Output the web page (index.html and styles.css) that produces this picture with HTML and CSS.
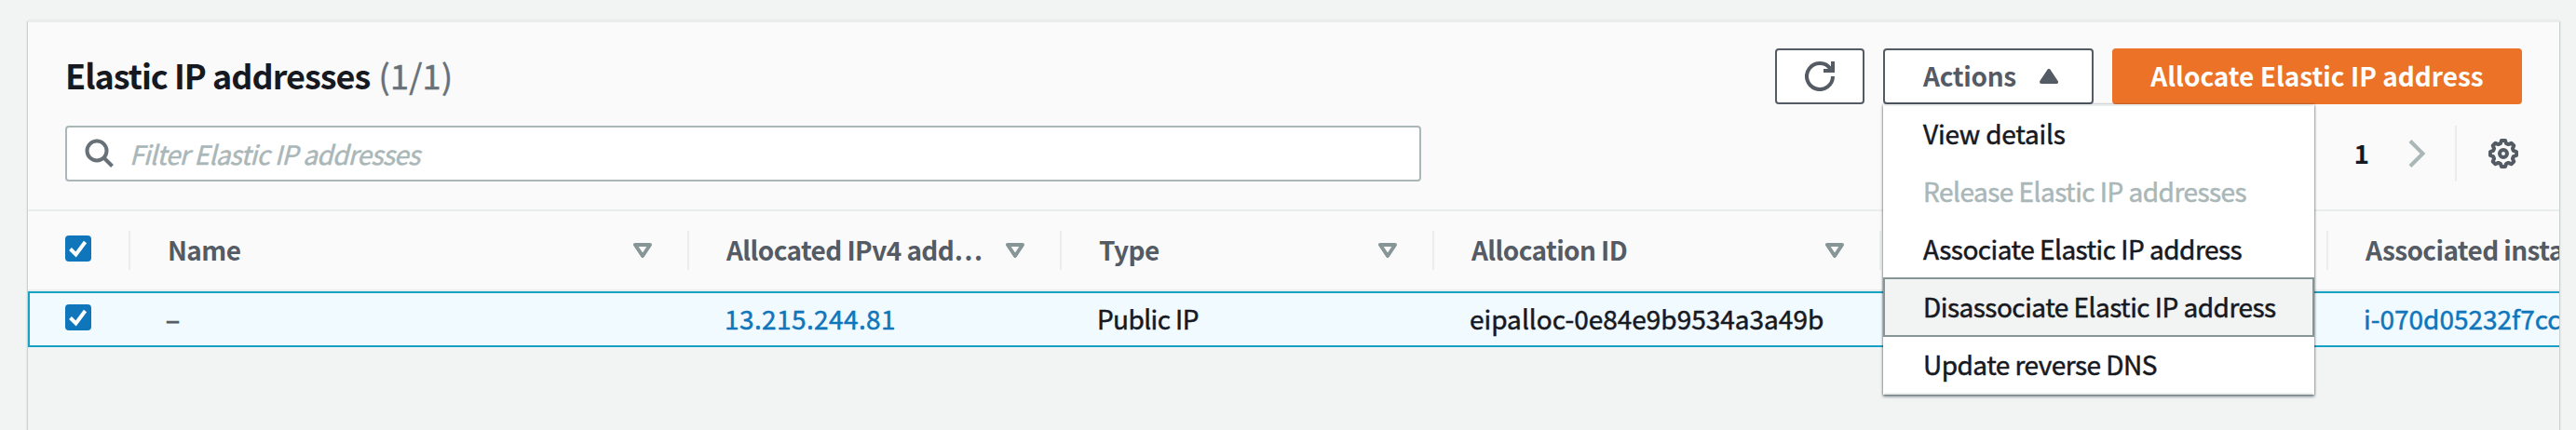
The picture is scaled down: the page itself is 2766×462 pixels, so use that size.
FILE: index.html
```
<!DOCTYPE html>
<html lang="en">
<head>
<meta charset="utf-8">
<title>Elastic IP addresses</title>
<link rel="stylesheet" href="styles.css">
</head>
<body>
<svg class="defs" aria-hidden="true">
  <symbol id="check" viewBox="0 0 28 28"><path d="M5.5 14.5l6 6L21.5 7" fill="none" stroke="#fff" stroke-width="4"/></symbol>
  <symbol id="sort" viewBox="0 0 20 16"><path d="M2 2h16l-8 12z" fill="none" stroke="#879596" stroke-width="4" stroke-linejoin="round"/></symbol>
</svg>
<main class="panel">
  <header class="panel-header">
    <div class="title-row">
      <h1 class="title"><span class="title-text">Elastic IP addresses</span> <span class="count">(1/1)</span></h1>
      <div class="actions">
        <button class="btn btn-icon" aria-label="Refresh">
          <svg width="32" height="32" viewBox="0 0 32 32" fill="none" stroke="#545b64" stroke-width="4"><path d="M30 16A14 14 0 1 1 27.500 8"/><path d="M20 10h10V0"/></svg>
        </button>
        <div class="menu-wrap">
          <button class="btn btn-menu"><span class="btn-text">Actions</span>
            <svg width="20" height="16" viewBox="0 0 20 16"><path d="M10 2L18 14H2z" fill="#545b64" stroke="#545b64" stroke-width="4" stroke-linejoin="round"/></svg>
          </button>
          <ul class="menu">
            <li class="item"><span class="t-view">View details</span></li>
            <li class="item disabled"><span>Release Elastic IP addresses</span></li>
            <li class="item"><span>Associate Elastic IP address</span></li>
            <li class="item active"><span>Disassociate Elastic IP address</span></li>
            <li class="item"><span>Update reverse DNS</span></li>
          </ul>
        </div>
        <button class="btn btn-primary"><span class="btn-text">Allocate Elastic IP address</span></button>
      </div>
    </div>
    <div class="filter-row">
      <div class="search">
        <svg width="32" height="32" viewBox="0 0 32 32" fill="none" stroke="#687078" stroke-width="4"><circle cx="13" cy="13" r="10.500"/><path d="M20.500 20.500l9 9"/></svg>
        <span class="placeholder">Filter Elastic IP addresses</span>
      </div>
      <div class="pager">
        <span class="page">1</span>
        <svg class="next" width="20" height="32" viewBox="0 0 20 32" fill="none" stroke="#aab7b8" stroke-width="4"><path d="M2 2.500L15.500 16 2 29.500"/></svg>
        <div class="settings">
          <svg width="32" height="32" viewBox="0 0 32 32" fill="none" stroke="#545b64" stroke-width="4" stroke-linejoin="round"><path d="M14 2h4l1.200 3.200 2.200.9L24.500 4.700l2.800 2.800-1.400 3.100.9 2.200L30 14v4l-3.200 1.200-.9 2.200 1.400 3.100-2.800 2.800-3.100-1.400-2.200.9L18 30h-4l-1.200-3.200-2.200-.9-3.100 1.400-2.800-2.800 1.400-3.100-.9-2.200L2 18v-4l3.200-1.200.9-2.200-1.400-3.100 2.800-2.800 3.100 1.400 2.200-.9z"/><circle cx="16" cy="16" r="4"/></svg>
        </div>
      </div>
    </div>
  </header>
  <section class="table">
    <div class="row head">
      <div class="cell pick"><svg class="checkbox"><use href="#check"/></svg></div>
      <div class="cell"><span>Name</span><svg class="sort"><use href="#sort"/></svg></div>
      <div class="cell"><span>Allocated IPv4 add…</span><svg class="sort"><use href="#sort"/></svg></div>
      <div class="cell"><span>Type</span><svg class="sort"><use href="#sort"/></svg></div>
      <div class="cell"><span>Allocation ID</span><svg class="sort"><use href="#sort"/></svg></div>
      <div class="cell"></div>
      <div class="cell"><span>Associated insta</span></div>
    </div>
    <div class="row selected">
      <div class="cell pick"><svg class="checkbox"><use href="#check"/></svg></div>
      <div class="cell muted"><span class="dash">–</span></div>
      <div class="cell link"><span class="v-ip">13.215.244.81</span></div>
      <div class="cell"><span class="v-type">Public IP</span></div>
      <div class="cell"><span>eipalloc-0e84e9b9534a3a49b</span></div>
      <div class="cell"></div>
      <div class="cell link"><span>i-070d05232f7cc</span></div>
    </div>
  </section>
</main>
</body>
</html>
```
FILE: styles.css
```
* { box-sizing: border-box; }
body {
  margin: 0;
  height: 462px;
  padding: 22px 18px 0 30px;
  overflow: hidden;
  background: #f2f3f3;
  color: #16191f;
  font: 28px/44px "Noto Sans CJK SC", "Noto Sans", sans-serif;
}
.defs { position: absolute; width: 0; height: 0; }
svg { display: block; flex: none; }
.panel {
  height: 440px;
  border-top: 2px solid #eaeded;
  box-shadow: 0 1px 2px rgba(0, 28, 36, .5);
}
.panel-header {
  height: 203px;
  padding: 28px 40px 0;
  background: #fafafa;
  border-bottom: 2px solid #eaeded;
}
.title-row, .filter-row { display: flex; justify-content: space-between; height: 60px; }
.filter-row { margin-top: 23px; }
.title { margin: 0; font-size: 36px; line-height: 56px; font-weight: 700; white-space: nowrap; }
.title-text { letter-spacing: -1px; }
.count { margin-left: 1px; font-weight: 400; color: #687078; -webkit-text-stroke: .5px; letter-spacing: .3px; }
.actions { display: flex; gap: 20px; }
.btn {
  display: flex;
  align-items: center;
  justify-content: center;
  height: 60px;
  padding: 0;
  border: 2px solid #545b64;
  border-radius: 4px;
  background: #fff;
  color: #545b64;
  font: inherit;
  font-weight: 700;
  white-space: nowrap;
}
.btn-text { padding-bottom: 2px; }
.btn-icon { width: 96px; }
.btn-menu { width: 226px; justify-content: space-between; padding: 0 36px 0 41px; }
.btn-menu .btn-text { letter-spacing: -.3px; }
.btn-primary { width: 440px; border-color: #eb7226; background: #eb7226; color: #fff; }
.menu-wrap { position: relative; }
.menu {
  position: absolute;
  z-index: 2;
  top: 60px;
  left: 0;
  width: 463px;
  height: 312px;
  margin: 0;
  padding: 0;
  list-style: none;
  background: #fff;
  box-shadow: 0 2px 3px rgba(0, 28, 36, .55), 0 0 2px rgba(0, 28, 36, .4);
}
.item {
  display: flex;
  align-items: center;
  height: 64px;
  margin-bottom: -2px;
  padding: 0 0 3px 41px;
  border: 2px solid transparent;
  white-space: nowrap;
  letter-spacing: -.52px;
  -webkit-text-stroke: .5px;
}
.t-view { letter-spacing: -.2px; }
.item:first-child { border-top-color: #eaeded; }
.item:last-child { border-bottom-color: #eaeded; }
.disabled { color: #aab7b8; }
.active { position: relative; background: #f2f3f3; border-color: #879596; }
.search {
  display: flex;
  align-items: center;
  gap: 16px;
  width: 1456px;
  padding-left: 19px;
  border: 2px solid #aab7b8;
  border-radius: 4px;
  background: #fff;
}
.placeholder { color: #aab7b8; font-style: italic; white-space: nowrap; letter-spacing: -.65px; -webkit-text-stroke: .5px; }
.pager { display: flex; align-items: center; }
.page { font-weight: 700; margin-right: 42px; padding-bottom: 2px; }
.next { margin-right: 30px; }
.settings { display: flex; align-items: center; justify-content: flex-end; width: 72px; height: 60px; padding-right: 4px; border-left: 2px solid #eaeded; }
.table { overflow: hidden; }
.row { display: grid; grid-template-columns: 110px 600px 400px 400px 480px 480px 248px; }
.cell { display: flex; align-items: center; justify-content: space-between; overflow: hidden; padding: 0 38px 0 38px; white-space: nowrap; }
.head { height: 86px; background: #fafafa; border-bottom: 2px solid #eaeded; color: #545b64; font-weight: 700; align-items: center; }
.head .cell { height: 42px; border-right: 2px solid #eaeded; padding-left: 40px; letter-spacing: -.6px; }
.head .cell span { padding-bottom: 2px; }
.head .cell:last-child, .selected .cell:last-child { padding-right: 0; border-right: 0; }
.selected { position: relative; height: 60px; background: #f1faff; -webkit-text-stroke: .5px; }
.selected .cell { padding-bottom: 2px; }
.selected::after { content: ""; position: absolute; inset: 0; border: 2px solid #16a2c5; border-right: 0; }
.checkbox { width: 28px; height: 28px; border-radius: 4px; background: #0f76bb; }
.head .pick, .selected .pick { padding-left: 40px; padding-bottom: 4px; overflow: visible; }
.sort { width: 20px; height: 16px; }
.muted { color: #545b64; }
.dash { -webkit-text-stroke: 1px; }
.link { color: #0f76bb; }
.v-ip { letter-spacing: .4px; }
.v-type { letter-spacing: -.6px; }
```
